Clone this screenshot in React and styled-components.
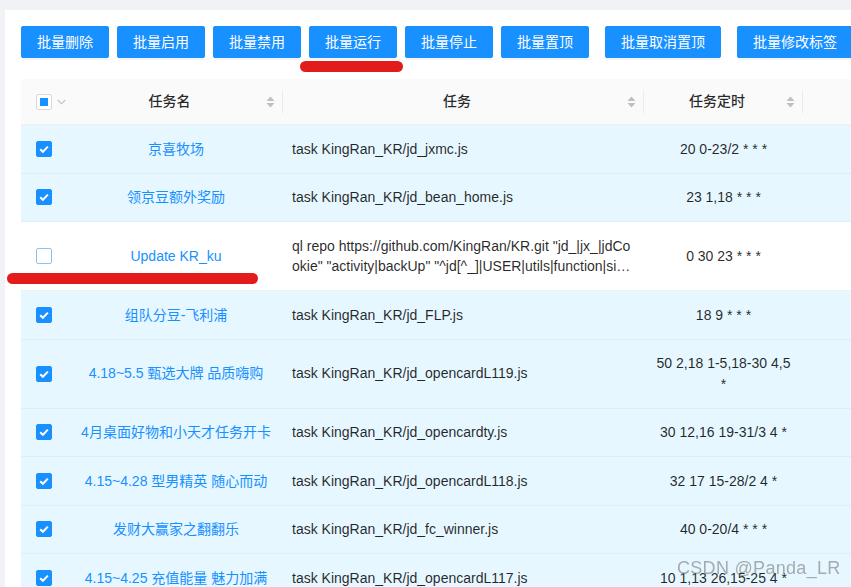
import React from 'react';
import styled, { createGlobalStyle } from 'styled-components';

const GlobalStyle = createGlobalStyle`
  html, body { margin: 0; padding: 0; overflow: hidden; background: #f0f2f5; }
  body {
    font-family: "Liberation Sans", "Noto Sans CJK SC", sans-serif;
    font-size: 14px;
    color: rgba(0, 0, 0, 0.85);
  }
  * { box-sizing: border-box; }
`;

const Page = styled.div`
  padding: 10px 0 0 5px;
  width: 1200px;
  height: 587px;
  overflow: hidden;
`;

const Card = styled.div`
  position: relative;
  background: #fff;
  padding: 16px;
  min-height: 700px;
`;

const Toolbar = styled.div`
  display: flex;
  gap: 8px;
`;

const Button = styled.button`
  flex: none;
  height: 32px;
  padding: 0 15px;
  margin-left: ${(p) => (p.$spaced ? '8px' : '0')};
  border: 1px solid #1890ff;
  border-radius: 2px;
  background: #1890ff;
  color: #fff;
  font-family: inherit;
  font-size: 14px;
  line-height: 30px;
  box-shadow: 0 2px 0 rgba(0, 0, 0, 0.045);
  cursor: pointer;
`;

const Mark = styled.div`
  position: absolute;
  left: ${(p) => p.$x}px;
  top: ${(p) => p.$y}px;
  width: ${(p) => p.$w}px;
  height: 11px;
  border-radius: 6px;
  background: #e31b1b;
`;

const Table = styled.table`
  margin-top: 21px;
  border-collapse: separate;
  border-spacing: 0;
  table-layout: fixed;
  width: 1082px;
`;

const Th = styled.th`
  position: relative;
  background: #fafafa;
  padding: ${(p) => (p.$check ? '12px 0 12px 15px' : '12px 8px')};
  line-height: 21px;
  font-weight: 500;
  color: rgba(0, 0, 0, 0.85);
  text-align: ${(p) => (p.$check ? 'left' : 'center')};
  border-bottom: 1px solid #f0f0f0;
  ${(p) =>
    p.$divider &&
    `
    &::before {
      content: '';
      position: absolute;
      right: 0;
      top: 50%;
      width: 1px;
      height: 23px;
      transform: translateY(-50%);
      background: rgba(0, 0, 0, 0.06);
    }
  `}
`;

const HeadInner = styled.div`
  display: flex;
  align-items: center;
`;

const HeadTitle = styled.span`
  flex: 1;
  text-align: center;
`;

const SorterIcon = styled.svg`
  flex: none;
  width: 9px;
  height: 12px;
  margin-left: 4px;
  fill: #bfbfbf;
`;

const Sorter = () => (
  <SorterIcon viewBox="0 0 9 12">
    <path d="M4.5 0.5 L8.5 5 L0.5 5 Z" />
    <path d="M0.5 7 L8.5 7 L4.5 11.5 Z" />
  </SorterIcon>
);

const CheckWrap = styled.span`
  display: inline-flex;
  align-items: center;
  gap: 5px;
  vertical-align: middle;
`;

const Box = styled.span`
  display: inline-flex;
  align-items: center;
  justify-content: center;
  width: 16px;
  height: 16px;
  border-radius: 2px;
  border: 1px solid ${(p) => (p.$checked ? '#1890ff' : p.$soft ? '#8fc0f2' : '#d9d9d9')};
  background: ${(p) => (p.$checked ? '#1890ff' : '#fff')};
  vertical-align: middle;
`;

const Inner = styled.span`
  width: 8px;
  height: 8px;
  background: #1890ff;
`;

const Checkbox = ({ checked, indeterminate, soft }) => (
  <Box $checked={checked} $soft={soft}>
    {checked && (
      <svg width="12" height="12" viewBox="0 0 12 12">
        <path d="M2.2 6.2 L4.9 8.8 L9.9 3.6" fill="none" stroke="#fff" strokeWidth="2" />
      </svg>
    )}
    {indeterminate && <Inner />}
  </Box>
);

const Chevron = styled.svg`
  width: 9px;
  height: 6px;
  stroke: #bfbfbf;
  fill: none;
`;

const Tr = styled.tr``;

const Td = styled.td`
  padding: ${(p) => (p.$check ? '13.5px 0 13.5px 15px' : p.$cmd ? '13.5px 7px 13.5px 9px' : '13.5px 8px')};
  line-height: 20.5px;
  vertical-align: middle;
  text-align: ${(p) => p.$align || 'left'};
  color: ${(p) => (p.$link ? '#1890ff' : 'rgba(0, 0, 0, 0.85)')};
  background: ${(p) => (p.$selected ? '#e6f7ff' : '#fff')};
  border-bottom: 1px solid ${(p) => (p.$selected ? '#d8effc' : '#f0f0f0')};
`;

const CheckHolder = styled.div`
  display: flex;
  align-items: center;
  height: 20.5px;
`;

const Clamp = styled.div`
  display: -webkit-box;
  -webkit-line-clamp: 2;
  -webkit-box-orient: vertical;
  overflow: hidden;
  word-break: break-all;
`;

const Watermark = styled.div`
  position: fixed;
  left: 677px;
  top: 556px;
  font-family: "Liberation Sans", sans-serif;
  font-size: 18px;
  line-height: 24px;
  color: rgba(120, 120, 120, 0.6);
  letter-spacing: 0.3px;
  pointer-events: none;
`;

const buttons = [
  { t: '批量删除' },
  { t: '批量启用' },
  { t: '批量禁用' },
  { t: '批量运行' },
  { t: '批量停止' },
  { t: '批量置顶' },
  { t: '批量取消置顶', spaced: true },
  { t: '批量修改标签', spaced: true },
];

const rows = [
  { name: '京喜牧场', cmd: 'task KingRan_KR/jd_jxmc.js', cron: '20 0-23/2 * * *', sel: true },
  { name: '领京豆额外奖励', cmd: 'task KingRan_KR/jd_bean_home.js', cron: '23 1,18 * * *', sel: true },
  {
    name: 'Update KR_ku',
    cmd: 'ql repo https://github.com/KingRan/KR.git "jd_|jx_|jdCookie" "activity|backUp" "^jd[^_]|USER|utils|function|sign|sendNotify|ql|JDJR"',
    cron: '0 30 23 * * *',
    sel: false,
  },
  { name: '组队分豆-飞利浦', cmd: 'task KingRan_KR/jd_FLP.js', cron: '18 9 * * *', sel: true },
  { name: '4.18~5.5 甄选大牌 品质嗨购', cmd: 'task KingRan_KR/jd_opencardL119.js', cron: '50 2,18 1-5,18-30 4,5 *', sel: true },
  { name: '4月桌面好物和小天才任务开卡', cmd: 'task KingRan_KR/jd_opencardty.js', cron: '30 12,16 19-31/3 4 *', sel: true },
  { name: '4.15~4.28 型男精英 随心而动', cmd: 'task KingRan_KR/jd_opencardL118.js', cron: '32 17 15-28/2 4 *', sel: true },
  { name: '发财大赢家之翻翻乐', cmd: 'task KingRan_KR/jd_fc_winner.js', cron: '40 0-20/4 * * *', sel: true },
  { name: '4.15~4.25 充值能量 魅力加满', cmd: 'task KingRan_KR/jd_opencardL117.js', cron: '10 1,13 26,15-25 4 *', sel: true },
];

export default function App() {
  return (
    <Page>
      <GlobalStyle />
      <Card>
        <Toolbar>
          {buttons.map((b) => (
            <Button key={b.t} $spaced={b.spaced}>
              {b.t}
            </Button>
          ))}
        </Toolbar>
        <Table>
          <colgroup>
            <col style={{ width: 48 }} />
            <col style={{ width: 214 }} />
            <col style={{ width: 361 }} />
            <col style={{ width: 159 }} />
            <col style={{ width: 300 }} />
          </colgroup>
          <thead>
            <tr>
              <Th $check>
                <CheckWrap>
                  <Checkbox indeterminate />
                  <Chevron viewBox="0 0 9 6">
                    <path d="M0.8 1 L4.5 4.8 L8.2 1" strokeWidth="1.1" />
                  </Chevron>
                </CheckWrap>
              </Th>
              <Th $divider>
                <HeadInner>
                  <HeadTitle>任务名</HeadTitle>
                  <Sorter />
                </HeadInner>
              </Th>
              <Th $divider>
                <HeadInner>
                  <HeadTitle>任务</HeadTitle>
                  <Sorter />
                </HeadInner>
              </Th>
              <Th $divider>
                <HeadInner>
                  <HeadTitle>任务定时</HeadTitle>
                  <Sorter />
                </HeadInner>
              </Th>
              <Th>
                <HeadInner>
                  <HeadTitle>&nbsp;</HeadTitle>
                </HeadInner>
              </Th>
            </tr>
          </thead>
          <tbody>
            {rows.map((r) => (
              <Tr key={r.name}>
                <Td $check $selected={r.sel}>
                  <CheckHolder>
                    <Checkbox checked={r.sel} soft />
                  </CheckHolder>
                </Td>
                <Td $align="center" $link $selected={r.sel}>
                  {r.name}
                </Td>
                <Td $cmd $selected={r.sel}>
                  <Clamp>{r.cmd}</Clamp>
                </Td>
                <Td $align="center" $selected={r.sel}>
                  {r.cron}
                </Td>
                <Td $selected={r.sel} />
              </Tr>
            ))}
          </tbody>
        </Table>
        <Mark $x={295} $y={51} $w={103} />
        <Mark $x={2} $y={263} $w={251} />
      </Card>
      <Watermark>CSDN @Panda_LR</Watermark>
    </Page>
  );
}
